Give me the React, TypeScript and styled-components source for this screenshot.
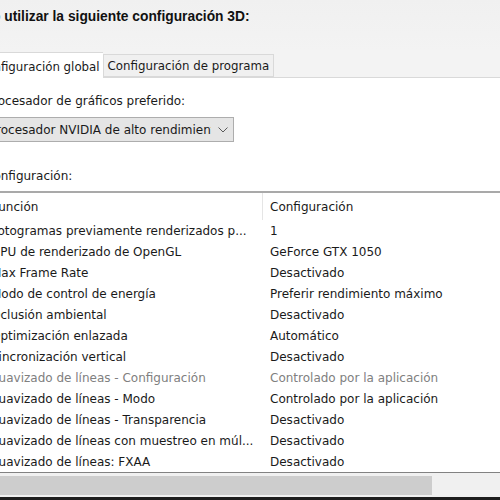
import { createGlobalStyle, styled } from 'styled-components';

const rows: { name: string; value: string; disabled?: boolean }[] = [
  { name: 'Fotogramas previamente renderizados p...', value: '1' },
  { name: 'GPU de renderizado de OpenGL', value: 'GeForce GTX 1050' },
  { name: 'Max Frame Rate', value: 'Desactivado' },
  { name: 'Modo de control de energía', value: 'Preferir rendimiento máximo' },
  { name: 'Oclusión ambiental', value: 'Desactivado' },
  { name: 'Optimización enlazada', value: 'Automático' },
  { name: 'Sincronización vertical', value: 'Desactivado' },
  { name: 'Suavizado de líneas - Configuración', value: 'Controlado por la aplicación', disabled: true },
  { name: 'Suavizado de líneas - Modo', value: 'Controlado por la aplicación' },
  { name: 'Suavizado de líneas - Transparencia', value: 'Desactivado' },
  { name: 'Suavizado de líneas con muestreo en múl...', value: 'Desactivado' },
  { name: 'Suavizado de líneas: FXAA', value: 'Desactivado' },
];

export default function App(): JSX.Element {
  return (
    <>
      <GlobalStyle />
      <Window>
        <Header>
          <Title>Deseo utilizar la siguiente configuración 3D:</Title>
        </Header>
        <TabStrip>
          <Tab $active>Configuración global</Tab>
          <Tab>Configuración de programa</Tab>
        </TabStrip>
        <Panel>
          <Label>Procesador de gráficos preferido:</Label>
          <Select>
            <span>Procesador NVIDIA de alto rendimiento</span>
            <Chevron viewBox="0 0 10 6">
              <polyline points="0.5,0.5 5,5 9.5,0.5" />
            </Chevron>
          </Select>
          <SettingsLabel>Configuración:</SettingsLabel>
          <Table>
            <HeaderRow>
              <HeaderCell>Función</HeaderCell>
              <HeaderCell $divider>Configuración</HeaderCell>
            </HeaderRow>
            {rows.map((row) => (
              <Row key={row.name} $disabled={row.disabled}>
                <Cell>{row.name}</Cell>
                <ValueCell>{row.value}</ValueCell>
              </Row>
            ))}
          </Table>
          <ScrollTrack>
            <ScrollThumb />
          </ScrollTrack>
          <BottomEdge />
        </Panel>
      </Window>
    </>
  );
}

const GlobalStyle = createGlobalStyle`
  html, body {
    margin: 0;
    padding: 0;
    width: 500px;
    height: 500px;
    overflow: hidden;
    background: #ffffff;
  }
  body {
    font-family: "DejaVu Sans", Verdana, sans-serif;
    font-size: 12px;
    color: #1a1a1a;
  }
`;

const Window = styled.div`
  margin-left: -14px;
  width: 514px;
  height: 500px;
  display: flex;
  flex-direction: column;
`;

const Header = styled.div`
  height: 50px;
  background: linear-gradient(#f0f0f0, #f3f3f3);
  display: flex;
  align-items: flex-start;
  padding-top: 9px;
  box-sizing: border-box;
`;

const Title = styled.div`
  margin-left: -27px;
  font-family: "Liberation Sans", Arial, sans-serif;
  font-weight: bold;
  font-size: 13.8px;
  line-height: 16px;
  color: #111;
  white-space: nowrap;
`;

const TabStrip = styled.div`
  height: 28px;
  background: #f3f3f3;
  border-bottom: 1px solid #d9d9d9;
  display: flex;
  align-items: flex-end;
  margin-left: -15px;
  box-sizing: border-box;
`;

const Tab = styled.div<{ $active?: boolean }>`
  box-sizing: border-box;
  height: ${(p) => (p.$active ? '26px' : '23px')};
  margin-bottom: ${(p) => (p.$active ? '-1px' : '0')};
  padding: ${(p) => (p.$active ? '6px 3px 0 6px' : '3px 4px 0 4px')};
  background: ${(p) => (p.$active ? '#ffffff' : '#f0f0f0')};
  border: 1px solid #d9d9d9;
  border-bottom: ${(p) => (p.$active ? 'none' : '1px solid #d9d9d9')};
  border-right: ${(p) => (p.$active ? 'none' : '1px solid #d9d9d9')};
  line-height: 16px;
  font-size: 11.8px;
  white-space: nowrap;
`;

const Panel = styled.div`
  flex: 1;
  background: #ffffff;
  display: flex;
  flex-direction: column;
  padding-top: 15px;
`;

const Label = styled.div`
  line-height: 16px;
  white-space: nowrap;
`;

const Select = styled.div`
  margin-top: 8px;
  width: 248px;
  height: 25px;
  box-sizing: border-box;
  background: #e5e5e5;
  border: 1px solid #adadad;
  display: flex;
  align-items: center;
  justify-content: space-between;
  padding: 0 5px 0 2px;
  white-space: nowrap;
  overflow: hidden;

  span {
    overflow: hidden;
    width: 222px;
  }
`;

const Chevron = styled.svg`
  width: 10px;
  height: 6px;
  fill: none;
  stroke: #5a5a5a;
  stroke-width: 1;
`;

const SettingsLabel = styled(Label)`
  margin-top: 26px;
  margin-left: -1px;
`;

const Table = styled.div`
  margin-top: 7px;
  border-top: 2px solid #a9a9a9;
  border-bottom: 1px solid #828282;
  display: flex;
  flex-direction: column;
`;

const HeaderRow = styled.div`
  display: grid;
  grid-template-columns: 276px 1fr;
  height: 27px;
`;

const HeaderCell = styled.div<{ $divider?: boolean }>`
  display: flex;
  align-items: center;
  padding-left: ${(p) => (p.$divider ? '7px' : '6px')};
  border-left: ${(p) => (p.$divider ? '1px solid #e5e5e5' : 'none')};
  white-space: nowrap;
`;

const Row = styled.div<{ $disabled?: boolean }>`
  display: grid;
  grid-template-columns: 276px 1fr;
  height: 21px;
  align-items: center;
  color: ${(p) => (p.$disabled ? '#808080' : '#1a1a1a')};
`;

const Cell = styled.div`
  padding-left: 5px;
  white-space: nowrap;
`;

const ValueCell = styled.div`
  padding-left: 8px;
  white-space: nowrap;
`;

const ScrollTrack = styled.div`
  height: 24px;
  background: #f0f0f0;
  display: flex;
  align-items: center;
`;

const ScrollThumb = styled.div`
  width: 446px;
  height: 19px;
  background: #cdcdcd;
`;

const BottomEdge = styled.div`
  flex: 1;
  background: #1e1e1e;
`;
